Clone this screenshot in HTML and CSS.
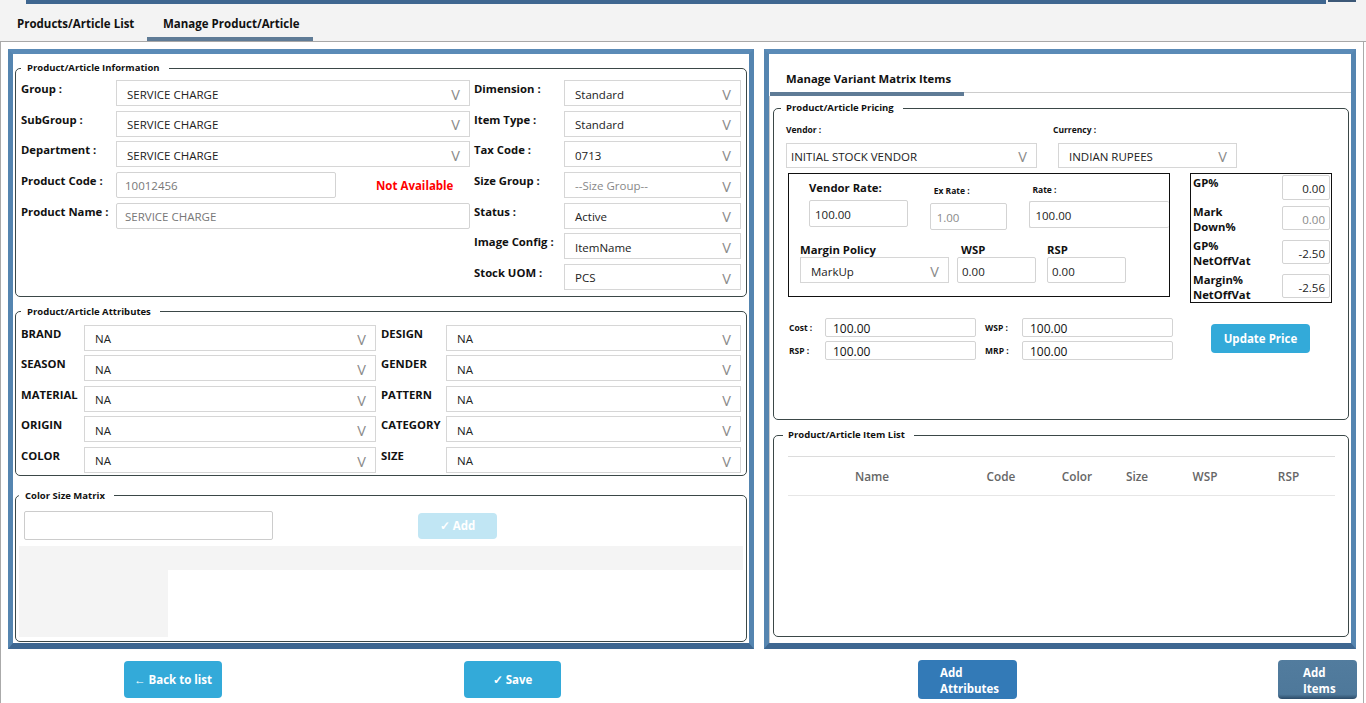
FILE: index.html
```html
<!DOCTYPE html>
<html>
<head>
<meta charset="utf-8">
<title>Manage Product/Article</title>
<link rel="stylesheet" href="styles.css">
</head>
<body>
<header class="top">
  <div class="strips"><div class="strip"></div><div class="strip2"></div></div>
  <nav class="tabs">
    <div class="tab tab1">Products/Article List</div>
    <div class="tab tab2 active">Manage Product/Article</div>
  </nav>
</header>
<div class="page">
  <main class="main">
    <section class="panel pl">
      <fieldset class="fs fs-info">
        <legend>Product/Article Information</legend>
        <div class="cols">
          <div class="grid g-info-l">
            <div class="lbl">Group :</div>
            <div class="sel"><span>SERVICE CHARGE</span><i>V</i></div>
            <div class="lbl">SubGroup :</div>
            <div class="sel"><span>SERVICE CHARGE</span><i>V</i></div>
            <div class="lbl">Department :</div>
            <div class="sel"><span>SERVICE CHARGE</span><i>V</i></div>
            <div class="lbl">Product Code :</div>
            <div class="pc"><div class="inp inp-code muted">10012456</div><span class="na">Not Available</span></div>
            <div class="lbl">Product Name :</div>
            <div class="inp muted">SERVICE CHARGE</div>
          </div>
          <div class="grid g-info-r">
            <div class="lbl">Dimension :</div>
            <div class="sel"><span>Standard</span><i>V</i></div>
            <div class="lbl">Item Type :</div>
            <div class="sel"><span>Standard</span><i>V</i></div>
            <div class="lbl">Tax Code :</div>
            <div class="sel"><span>0713</span><i>V</i></div>
            <div class="lbl">Size Group :</div>
            <div class="sel"><span class="ph">--Size Group--</span><i>V</i></div>
            <div class="lbl">Status :</div>
            <div class="sel"><span>Active</span><i>V</i></div>
            <div class="lbl">Image Config :</div>
            <div class="sel"><span>ItemName</span><i>V</i></div>
            <div class="lbl">Stock UOM :</div>
            <div class="sel"><span>PCS</span><i>V</i></div>
          </div>
        </div>
      </fieldset>

      <fieldset class="fs fs-attr">
        <legend>Product/Article Attributes</legend>
        <div class="cols">
          <div class="grid g-attr-l">
            <div class="lbl">BRAND</div><div class="sel"><span>NA</span><i>V</i></div>
            <div class="lbl">SEASON</div><div class="sel"><span>NA</span><i>V</i></div>
            <div class="lbl">MATERIAL</div><div class="sel"><span>NA</span><i>V</i></div>
            <div class="lbl">ORIGIN</div><div class="sel"><span>NA</span><i>V</i></div>
            <div class="lbl">COLOR</div><div class="sel"><span>NA</span><i>V</i></div>
          </div>
          <div class="grid g-attr-r">
            <div class="lbl">DESIGN</div><div class="sel"><span>NA</span><i>V</i></div>
            <div class="lbl">GENDER</div><div class="sel"><span>NA</span><i>V</i></div>
            <div class="lbl">PATTERN</div><div class="sel"><span>NA</span><i>V</i></div>
            <div class="lbl">CATEGORY</div><div class="sel"><span>NA</span><i>V</i></div>
            <div class="lbl">SIZE</div><div class="sel"><span>NA</span><i>V</i></div>
          </div>
        </div>
      </fieldset>

      <fieldset class="fs fs-csm">
        <legend>Color Size Matrix</legend>
        <div class="csm-top">
          <div class="csm-inp"></div>
          <div class="btn btn-add">&#10003; Add</div>
        </div>
        <div class="csm-bar"></div>
        <div class="csm-block"></div>
      </fieldset>
    </section>

    <section class="panel pr">
      <div class="rtabs">
        <div class="rtab">Manage Variant Matrix Items</div>
        <div class="rtab-fill"></div>
      </div>
      <div class="rpane">
        <fieldset class="fs fs-price">
          <legend>Product/Article Pricing</legend>
          <div class="vc-row">
            <div class="vcol">
              <div class="slbl">Vendor :</div>
              <div class="sel sel-vendor"><span>INITIAL STOCK VENDOR</span><i>V</i></div>
            </div>
            <div class="ccol">
              <div class="slbl">Currency :</div>
              <div class="sel sel-cur"><span>INDIAN RUPEES</span><i>V</i></div>
            </div>
          </div>
          <div class="rate-area">
            <div class="box1">
              <div class="rowA">
                <div class="ra1"><div class="mlbl">Vendor Rate:</div><div class="inp inp-vr">100.00</div></div>
                <div class="ra2"><div class="slbl">Ex Rate :</div><div class="inp inp-ex muted2">1.00</div></div>
                <div class="ra3"><div class="slbl">Rate :</div><div class="inp inp-rate">100.00</div></div>
              </div>
              <div class="rowB">
                <div class="rb1"><div class="mlbl">Margin Policy</div><div class="sel sel-mp"><span>MarkUp</span><i>V</i></div></div>
                <div class="rb2"><div class="mlbl">WSP</div><div class="inp inp-sm">0.00</div></div>
                <div class="rb3"><div class="mlbl">RSP</div><div class="inp inp-sm">0.00</div></div>
              </div>
            </div>
            <div class="box2">
              <div class="gp gp1"><div class="gl">GP%</div><div class="inp gi">0.00</div></div>
              <div class="gp"><div class="gl">Mark<br>Down%</div><div class="inp gi muted2">0.00</div></div>
              <div class="gp"><div class="gl">GP%<br>NetOffVat</div><div class="inp gi">-2.50</div></div>
              <div class="gp"><div class="gl">Margin%<br>NetOffVat</div><div class="inp gi">-2.56</div></div>
            </div>
          </div>
          <div class="cost-area">
            <div class="cost-grid">
              <div class="clbl">Cost :</div><div class="inp ci">100.00</div>
              <div class="clbl clbl2">WSP :</div><div class="inp ci">100.00</div>
              <div class="clbl">RSP :</div><div class="inp ci">100.00</div>
              <div class="clbl clbl2">MRP :</div><div class="inp ci">100.00</div>
            </div>
            <div class="btn btn-upd">Update Price</div>
          </div>
        </fieldset>

        <fieldset class="fs fs-items">
          <legend>Product/Article Item List</legend>
          <div class="thead">
            <div>Name</div><div>Code</div><div>Color</div><div>Size</div><div>WSP</div><div>RSP</div>
          </div>
        </fieldset>
      </div>
    </section>
  </main>

  <footer class="foot">
    <div class="btn btn-back">&larr; Back to list</div>
    <div class="btn btn-save">&#10003; Save</div>
    <div class="btn btn-attr">Add<br>Attributes</div>
    <div class="btn btn-items">Add<br>Items</div>
  </footer>
</div>
</body>
</html>
```
FILE: styles.css
```css
* { box-sizing: border-box; }
html, body { margin: 0; padding: 0; background: #fff; }
body {
  font-family: "Open Sans", "Noto Sans", sans-serif;
  font-size: 11px;
  color: #222;
  width: 1366px;
  height: 703px;
  overflow: hidden;
}

/* top tabs */
.top { height: 42px; background: #f3f3f3; border-bottom: 1px solid #a8a8a8; }
.strips { display: flex; height: 4px; }
.strip { margin-left: 26px; width: 1300px; height: 4px; background: #3f6690; }
.strip2 { margin-left: 2px; width: 28px; height: 2px; background: #3c5877; }
.tabs { display: flex; height: 37px; }
.tab {
  display: flex; align-items: center;
  height: 37px; padding: 5px 0 0 16px;
  border-bottom: 4px solid transparent;
  font-weight: 700; font-size: 11.5px; color: #111;
}
.tab1 { width: 146px; margin-left: 1px; }
.tab2 { width: 166px; }
.tab.active { border-bottom-color: #5f7b96; }

/* page */
.page { width: 1364px; height: 661px; border-left: 1px solid #aaa; border-right: 1px solid #aaa; }
.main { display: flex; gap: 10px; padding: 7px 0 0 7px; }
.panel {
  height: 600px;
  border-style: solid;
  border-width: 5px 5px 6px 5px;
  border-color: #5b8bb7 #5585b0 #3e6791 #5585b0;
}
.pl { width: 746px; padding: 8px 2px 0 2px; }
.pr { width: 592px; display: flex; flex-direction: column; }

/* fieldsets */
.fs { margin: 0; border: 1px solid #3b4848; border-radius: 5px; min-width: 0; }
.fs legend {
  font-size: 9.5px; font-weight: 700; line-height: 12px;
  padding: 0 9px 0 6px; color: #111;
}
.fs-info { padding: 6px 5px 6px 5px; }
.fs-attr { margin-top: 9px; padding: 7px 5px 2px 5px; }
.fs-csm { margin-top: 14px; padding: 9px 3px 4px 3px; }

.cols { display: flex; }
.grid { display: grid; grid-auto-rows: 26px; }
.g-info-l { grid-template-columns: 95px 354px; row-gap: 4.67px; }
.g-info-r { grid-template-columns: 90px 1fr; row-gap: 4.67px; margin-left: 4px; flex: 1; }
.g-attr-l { grid-template-columns: 63px 292px; row-gap: 4.5px; }
.g-attr-r { grid-template-columns: 65px 1fr; row-gap: 4.5px; margin-left: 5px; flex: 1; }

.lbl { font-weight: 700; font-size: 11.3px; line-height: 16px; padding-top: 1px; color: #111; white-space: nowrap; }

.sel {
  display: flex; align-items: center; justify-content: space-between;
  height: 26px; padding: 2px 9px 0 10px;
  border: 1px solid #d6d6d6; background: #fff;
  font-size: 11.5px; color: #222; white-space: nowrap;
}
.sel i { font-style: normal; font-size: 14.5px; color: #8a8a8a; line-height: 1; padding-top: 2px; }
.sel .ph { color: #888; }

.inp {
  display: flex; align-items: center;
  height: 26px; padding: 2px 0 0 8px;
  border: 1px solid #d3d3d3; border-radius: 2px; background: #fff;
  font-size: 11.5px; color: #222; white-space: nowrap;
}
.muted { color: #777; }
.muted2 { color: #8a8a8a; }
.pc { display: flex; align-items: center; }
.inp-code { width: 220px; }
.na { margin-left: 40px; color: #f00; font-weight: 700; font-size: 11.5px; padding-top: 2px; }

/* color size matrix */
.csm-top { display: flex; height: 29px; padding-left: 5px; }
.csm-inp { width: 249px; height: 29px; border: 1px solid #ccc; border-radius: 2px; }
.btn {
  display: flex; align-items: center; justify-content: center;
  color: #fff; font-weight: 700; font-size: 11.5px;
  border-radius: 4px; background: #33aad9; white-space: nowrap;
}
.btn-add { margin: 2px 0 0 145px; width: 79px; height: 26px; background: #c1e6f4; }
.csm-bar { margin-top: 6px; height: 24px; background: #f4f4f4; }
.csm-block { width: 149px; height: 67px; background: #f4f4f4; }

/* right panel */
.rtabs { display: flex; align-items: flex-end; height: 42px; }
.rtab {
  display: flex; align-items: center;
  width: 194px; height: 42px; margin-left: 1px;
  padding: 10px 0 0 16px;
  border-bottom: 4px solid #5f7b96;
  font-weight: 700; font-size: 11.3px; color: #111;
}
.rtab-fill { flex: 1; height: 4px; border-top: 1px solid #ccc; }
.rpane { flex: 1; border-left: 1px solid #ccc; padding: 6px 2px 0 3px; }

.fs-price { padding: 10px 12px 59px 12px; }
.fs-price legend, .fs-items legend { margin-left: -5px; padding-left: 5px; }
.slbl { font-size: 8.5px; font-weight: 700; line-height: 12px; color: #111; white-space: nowrap; }
.mlbl { font-size: 11.3px; font-weight: 700; line-height: 16px; color: #111; white-space: nowrap; }
.vc-row { display: flex; }
.vcol { width: 251px; }
.ccol { margin-left: 16px; }
.vc-row .sel { margin-top: 7px; height: 25px; }
.sel-vendor { padding-left: 4px; }
.sel-cur { margin-left: 5px; width: 179px; }

.rate-area { display: flex; align-items: flex-start; margin-top: 5px; }
.box1 { margin-left: 2px; width: 382px; height: 124px; border: 1px solid #111; overflow: hidden; }
.rowA { display: flex; height: 56px; }
.ra1 { margin-left: 20px; width: 99px; }
.ra1 .mlbl { height: 26px; line-height: 28px; }
.inp-vr { height: 27px; padding-left: 5px; }
.ra2 { margin-left: 22px; width: 78px; }
.ra2 .slbl { height: 29px; padding-left: 4px; line-height: 34px; }
.inp-ex { height: 27px; padding-left: 6px; }
.ra3 { margin-left: 22px; width: 140px; }
.ra3 .slbl { height: 27px; padding-left: 3px; line-height: 32px; }
.inp-rate { height: 27px; padding-left: 5px; border-right: none; }
.rowB { display: flex; }
.rowB .mlbl { height: 27px; line-height: 18px; padding-top: 11px; }
.rb1 { margin-left: 11px; width: 149px; }
.sel-mp { height: 26px; }
.rb2 { margin-left: 8px; width: 79px; }
.rb2 .mlbl { padding-left: 4px; }
.rb3 { margin-left: 11px; width: 79px; }
.inp-sm { height: 26px; padding-left: 4px; }

.box2 { margin-left: 20px; width: 142px; height: 130px; border: 1px solid #111; padding: 1px 1px 0 2px; }
.gp { display: flex; justify-content: space-between; height: 34px; }
.gp1 { height: 31px; }
.gl { font-size: 11.3px; font-weight: 700; line-height: 15px; color: #111; margin-top: -2px; }
.gp1 .gl { margin-top: 0; }
.gi { width: 48px; height: 24px; justify-content: flex-end; padding: 2px 4px 0 0; }
.gp1 .gi { height: 25px; }

.cost-area { display: flex; align-items: flex-start; margin-top: 15px; }
.cost-grid { display: grid; grid-template-columns: 36px 151px 46px 151px; grid-auto-rows: 19px; row-gap: 4px; margin-left: 3px; }
.clbl { display: flex; align-items: center; font-size: 8.5px; font-weight: 700; color: #111; }
.clbl2 { padding-left: 9px; }
.ci { height: 19px; padding: 1px 0 0 7px; font-size: 12px; color: #111; }
.btn-upd { margin: 6px 0 0 38px; width: 99px; height: 29px; }

.fs-items { margin-top: 9px; padding: 15px 13px 140px 14px; }
.thead {
  display: grid;
  grid-template-columns: 168px 90px 62px 58px 78px 89px;
  height: 40px; align-items: center;
  border-top: 1px solid #dcdcdc; border-bottom: 1px solid #e6e6e6;
  color: #666; font-size: 11.8px; font-weight: 600;
}
.thead div { text-align: center; }

/* footer */
.foot { display: flex; align-items: flex-start; margin-top: 11px; }
.btn-back { margin: 1px 0 0 123px; width: 98px; height: 37px; }
.btn-save { margin: 1px 0 0 242px; width: 97px; height: 37px; }
.btn-attr {
  margin-left: 357px; width: 99px; height: 39px;
  background: #337ab7; justify-content: flex-start;
  padding: 3px 0 0 22px; line-height: 16px; white-space: normal;
}
.btn-items {
  margin-left: 261px; width: 79px; height: 39px;
  background: linear-gradient(#527c9e 0%, #4e789a 88%, #2c4b68 100%);
  justify-content: flex-start;
  padding: 3px 0 0 25px; line-height: 16px; white-space: normal;
}
```
